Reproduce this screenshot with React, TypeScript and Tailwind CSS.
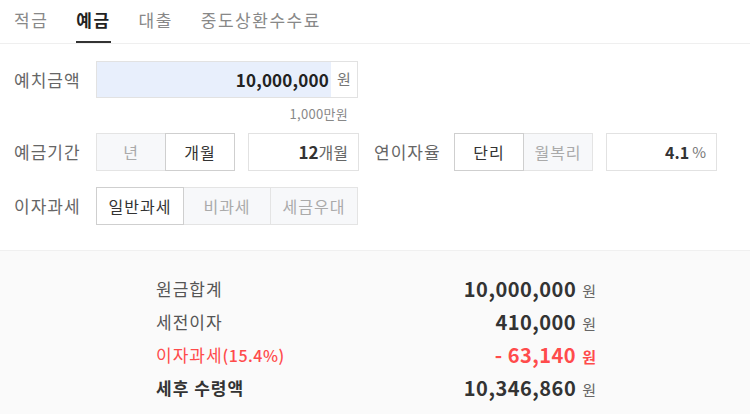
import React, { useState } from 'react';

const FONT = { fontFamily: '"Noto Sans CJK KR", "Noto Sans", sans-serif' };

type SegProps = {
  options: string[];
  value: string;
  onChange: (v: string) => void;
  widthClass: string;
};

const Segmented: React.FC<SegProps> = ({ options, value, onChange, widthClass }) => (
  <div className="flex h-[38px]">
    {options.map((opt, i) => {
      const active = opt === value;
      return (
        <button
          key={opt}
          type="button"
          onClick={() => onChange(opt)}
          className={`${widthClass} h-full text-[16px] tracking-[1px] border ${i > 0 ? '-ml-px' : ''} ${
            active
              ? 'relative z-10 bg-white border-[#cfcfcf] text-[#333]'
              : 'bg-[#f7f8fa] border-[#e4e4e4] text-[#aaa]'
          }`}
        >
          {opt}
        </button>
      );
    })}
  </div>
);

const TABS = ['적금', '예금', '대출', '중도상환수수료'];

const ResultRow: React.FC<{ label: React.ReactNode; value: string; red?: boolean; strong?: boolean }> = ({
  label,
  value,
  red,
  strong,
}) => (
  <div className="flex items-center justify-between h-[33px]">
    <span
      className={`text-[17px] tracking-[1px] ${
        red ? 'text-[#ff4b4b]' : strong ? 'text-[#333] font-bold' : 'text-[#555]'
      }`}
    >
      {label}
    </span>
    <span className="flex items-baseline gap-[6px]">
      <span className={`text-[20px] tracking-[0.5px] font-bold ${red ? 'text-[#ff4b4b]' : 'text-[#333]'}`}>
        {value}
      </span>
      <span className={`text-[15px] ${red ? 'text-[#ff4b4b] font-bold' : 'text-[#666]'}`}>원</span>
    </span>
  </div>
);

export default function App() {
  const [tab, setTab] = useState('예금');
  const [unit, setUnit] = useState('개월');
  const [rateType, setRateType] = useState('단리');
  const [tax, setTax] = useState('일반과세');

  return (
    <div className="w-[750px] h-[414px] bg-white overflow-hidden" style={FONT}>
      <nav className="flex h-[44px] border-b border-[#efefef] pl-[14px] gap-[28px]">
        {TABS.map((t) => (
          <button
            key={t}
            type="button"
            onClick={() => setTab(t)}
            className={`h-full text-[17px] tracking-[1.5px] pb-[2px] border-b-2 ${
              t === tab ? 'border-[#333] text-[#222] font-bold' : 'border-transparent text-[#888]'
            }`}
          >
            {t}
          </button>
        ))}
      </nav>

      <section className="px-[14px] pt-[17px] h-[206px]">
        <div className="flex items-center h-[37px]">
          <span className="w-[82px] text-[17px] tracking-[1px] text-[#666]">예치금액</span>
          <div className="flex w-[262px] h-full border border-[#e2e2e2]">
            <div className="flex-1 bg-[#e8effc] flex items-center justify-end pr-[2px] text-[17px] tracking-[0.2px] font-bold text-[#222]">
              10,000,000
            </div>
            <span className="w-[26px] flex items-center justify-center text-[15px] text-[#777]">원</span>
          </div>
        </div>
        <div className="w-[344px] text-right pr-[10px] pt-[6px] text-[13px] tracking-[0.3px] text-[#888] h-[35px]">
          1,000만원
        </div>

        <div className="flex items-center">
          <span className="w-[82px] text-[17px] tracking-[1px] text-[#666]">예금기간</span>
          <Segmented options={['년', '개월']} value={unit} onChange={setUnit} widthClass="w-[70px]" />
          <div className="ml-[13px] w-[111px] h-[38px] border border-[#e2e2e2] flex items-center justify-end pr-[10px]">
            <span className="text-[17px] font-bold text-[#333]">12</span>
            <span className="text-[16px] text-[#666]">개월</span>
          </div>
          <span className="ml-[15px] w-[80px] text-[17px] tracking-[1px] text-[#666]">연이자율</span>
          <Segmented options={['단리', '월복리']} value={rateType} onChange={setRateType} widthClass="w-[70px]" />
          <div className="ml-[13px] w-[111px] h-[38px] border border-[#e2e2e2] flex items-center justify-end pr-[10px] gap-[3px]">
            <span className="text-[16px] font-bold text-[#333]">4.1</span>
            <span className="text-[15px] text-[#777]">%</span>
          </div>
        </div>

        <div className="flex items-center mt-[16px]">
          <span className="w-[82px] text-[17px] tracking-[1px] text-[#666]">이자과세</span>
          <Segmented options={['일반과세', '비과세', '세금우대']} value={tax} onChange={setTax} widthClass="w-[88px]" />
        </div>
      </section>

      <section className="h-[164px] bg-[#fafafa] border-t border-[#f0f0f0] pt-[21px]">
        <div className="ml-[156px] w-[440px]">
          <ResultRow label="원금합계" value="10,000,000" />
          <ResultRow label="세전이자" value="410,000" />
          <ResultRow
            label={
              <>
                이자과세<span className="text-[16px] tracking-[0.5px] font-medium">(15.4%)</span>
              </>
            }
            value="- 63,140"
            red
          />
          <ResultRow label="세후 수령액" value="10,346,860" strong />
        </div>
      </section>
    </div>
  );
}
